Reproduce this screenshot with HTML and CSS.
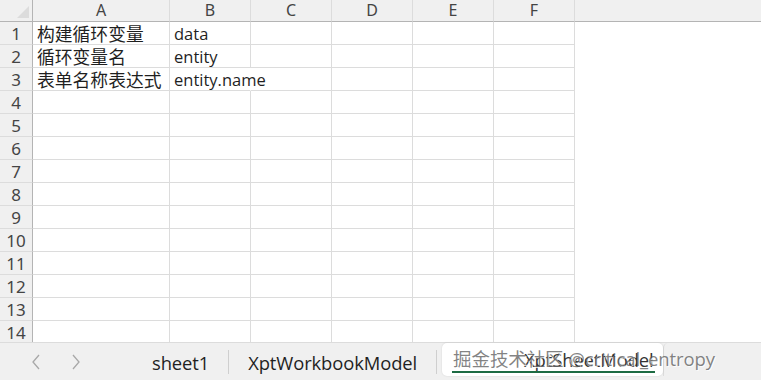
FILE: index.html
```html
<!DOCTYPE html>
<html lang="zh-CN">
<head>
  <meta charset="UTF-8">
  <title>XptSheetModel</title>
  <link rel="stylesheet" href="styles.css">
</head>
<body>

  <div class="sheet">
    <div class="grid">
      <div class="corner"><span class="corner-mark"></span></div>
      <div class="col-head">A</div>
      <div class="col-head">B</div>
      <div class="col-head">C</div>
      <div class="col-head">D</div>
      <div class="col-head">E</div>
      <div class="col-head">F</div>
      <div class="col-head rest"></div>

      <div class="row-head">1</div>
      <div class="cell cjk">构建循环变量</div>
      <div class="cell">data</div>
      <div class="cell"></div><div class="cell"></div><div class="cell"></div><div class="cell"></div><div class="cell rest"></div>

      <div class="row-head">2</div>
      <div class="cell cjk">循环变量名</div>
      <div class="cell">entity</div>
      <div class="cell"></div><div class="cell"></div><div class="cell"></div><div class="cell"></div><div class="cell rest"></div>

      <div class="row-head">3</div>
      <div class="cell cjk">表单名称表达式</div>
      <div class="cell spill">entity.name</div>
      <div class="cell"></div><div class="cell"></div><div class="cell"></div><div class="cell"></div><div class="cell rest"></div>
    </div>
    <div class="grid" id="emptyRows"></div>
  </div>

  <div class="tabbar">
    <div class="nav">
      <svg width="12" height="18" viewBox="0 0 12 18"><path d="M9 2 L3 9 L9 16" fill="none" stroke="#a8a8a8" stroke-width="1.3"/></svg>
      <svg width="12" height="18" viewBox="0 0 12 18"><path d="M3 2 L9 9 L3 16" fill="none" stroke="#a8a8a8" stroke-width="1.3"/></svg>
    </div>
    <div class="tab">sheet1</div>
    <div class="sep"></div>
    <div class="tab">XptWorkbookModel</div>
    <div class="sep"></div>
    <div class="tab active">
      <span class="tab-label">XptSheetModel</span>
      <span class="watermark">掘金技术社区 @critical_entropy</span>
    </div>
    <div class="tab next"></div>
  </div>

  <script>
    var rows = document.getElementById("emptyRows");
    for (var r = 4; r <= 14; r++) {
      var html = '<div class="row-head">' + r + '</div>';
      for (var c = 0; c < 6; c++) html += '<div class="cell"></div>';
      html += '<div class="cell rest"></div>';
      rows.insertAdjacentHTML("beforeend", html);
    }
  </script>

</body>
</html>
```

FILE: styles.css
```css
body {
  margin: 0;
  width: 761px;
  height: 380px;
  overflow: hidden;
  background-color: #fff;
  font-family: "Open Sans", "Noto Sans CJK SC", sans-serif;
  color: #1f1f1f;
}

.sheet {
  height: 342px;
  overflow: hidden;
}

.grid {
  display: grid;
  grid-template-columns: 33px 137px 81px 81px 81px 81px 81px 1fr;
}

.corner, .col-head {
  height: 21px;
  background-color: #f0f0f0;
  border-bottom: 1px solid #b4b4b4;
  position: relative;
}

.corner {
  border-right: 1px solid #b4b4b4;
}

.corner-mark {
  position: absolute;
  right: 3px;
  bottom: 3px;
  width: 0;
  height: 0;
  border-left: 12px solid transparent;
  border-bottom: 12px solid #dcdcdc;
}

.col-head {
  border-right: 1px solid #dcdcdc;
  text-align: center;
  font-family: "Noto Sans", sans-serif;
  font-size: 16px;
  line-height: 21px;
  color: #444;
}

.col-head.rest, .cell.rest {
  border-right: none;
}

.row-head {
  height: 22px;
  background-color: #f0f0f0;
  border-right: 1px solid #b4b4b4;
  border-bottom: 1px solid #dcdcdc;
  text-align: center;
  font-family: "Noto Sans", sans-serif;
  font-size: 17px;
  line-height: 23px;
  color: #444;
}

.cell {
  height: 22px;
  border-right: 1px solid #dcdcdc;
  border-bottom: 1px solid #dcdcdc;
  padding-left: 4px;
  font-size: 16.5px;
  line-height: 24px;
  white-space: nowrap;
}

.cell.cjk {
  font-size: 17.8px;
}

.cell.spill {
  border-right-color: #fff;
  position: relative;
  z-index: 1;
}

.grid .cell.rest {
  border-bottom: none;
}

.tabbar {
  height: 38px;
  background-color: #f0f0f0;
  border-top: 1px solid #dcdcdc;
  display: flex;
  align-items: center;
  position: relative;
}

.nav {
  display: flex;
  gap: 28px;
  padding-left: 30px;
  width: 133px;
  box-sizing: border-box;
}

.tab {
  font-family: "Open Sans", "Noto Sans CJK SC", sans-serif;
  font-size: 18.4px;
  color: #1f1f1f;
  padding: 0 19px;
  white-space: nowrap;
  letter-spacing: -0.1px;
}

.sep {
  width: 1px;
  height: 24px;
  background-color: #cfcfcf;
}

.tab.active {
  position: relative;
  background-color: #fff;
  border-radius: 5px;
  margin-left: 5px;
  height: 33px;
  width: 221px;
  box-sizing: border-box;
  padding: 0 10px;
  align-self: flex-start;
  box-shadow: 0 0 2px rgba(0, 0, 0, 0.12);
  line-height: 33px;
}

.tab-label {
  display: inline-block;
  padding-left: 72px;
  color: #333;
}

.tab.active::after {
  content: "";
  position: absolute;
  left: 10px;
  right: 8px;
  bottom: 3px;
  height: 2px;
  background-color: #1d6b43;
}

.watermark {
  position: absolute;
  left: 11px;
  top: -1px;
  font-size: 18.5px;
  white-space: nowrap;
  color: rgba(90, 90, 90, 0.75);
  text-shadow: 1px 1px 0 rgba(255, 255, 255, 0.8);
  z-index: 2;
}

.tab.next {
  flex: 1;
  height: 33px;
  align-self: flex-start;
  border-left: 1px solid #dcdcdc;
  border-radius: 5px 0 0 0;
}
```
